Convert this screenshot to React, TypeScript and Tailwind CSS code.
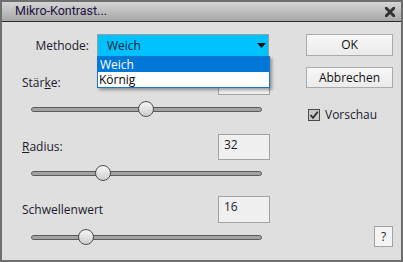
import React from 'react';

const font = { fontFamily: '"Open Sans", "Noto Sans", sans-serif' };

const Slider: React.FC<{ pos: number }> = ({ pos }) => (
  <div className="relative ml-[9px] w-[231px] h-[14px] flex items-center">
    <div className="w-full h-[5px] rounded-full border border-[#5a5a5a] bg-[#a3a3a3]" />
    {/* thumb sits on the track */}
    <div
      className="absolute top-[-1px] w-[16px] h-[16px] rounded-full border border-[#4f4f4f] bg-gradient-to-b from-[#f6f6f6] to-[#cfcfcf]"
      style={{ left: pos - 8 }}
    />
  </div>
);

const ValueBox: React.FC<{ value?: string; h?: string }> = ({ value, h = 'h-[26px]' }) => (
  <div className={`w-[52px] ${h} border border-[#a2a2a2] bg-[#f0f0f0] pl-[5px] pt-[2px] text-[12px] leading-[16px] text-[#1b1b2b]`}>
    {value}
  </div>
);

export default function App() {
  return (
    <div style={font} className="w-[403px] h-[262px] border-2 border-[#6e6e6e] bg-[#dfdfdf] flex flex-col text-[12px] text-[#1d1a2e] select-none">
      {/* Title bar */}
      <div className="h-[20px] shrink-0 flex items-center justify-between pl-[13px] pr-[6px] border-b border-[#2b2b2b] bg-gradient-to-b from-[#d6d6d6] to-[#a6a6a6]">
        <span style={{ fontFamily: 'Roboto, sans-serif' }} className="text-[12.5px] text-[#1e1040] leading-none">Mikro-Kontrast...</span>
        <svg width="10" height="10" viewBox="0 0 10 10">
          <path d="M1.2 1.2 L8.8 8.8 M8.8 1.2 L1.2 8.8" stroke="#333" strokeWidth="3" strokeLinecap="square" />
        </svg>
      </div>

      <div className="flex-1 flex">
        {/* Left column */}
        <div className="w-[268px] pl-[20px] flex flex-col">
          <div className="mt-[12px] h-[23px] flex items-center">
            <span className="w-[67px] text-right">Methode:</span>
            <div className="relative ml-[8px] w-[172px] h-[23px]">
              <div className="w-full h-full border border-[#9c9c9c] bg-[#00c2ff] flex items-center justify-between pl-[9px] pr-[2px] text-[#0c2433]">
                <span>Weich</span>
                <svg width="9" height="5" viewBox="0 0 9 5">
                  <path d="M0 0 H9 L4.5 5 Z" fill="#111" />
                </svg>
              </div>
              {/* open dropdown list */}
              <div className="absolute left-0 top-[22px] w-[173px] border border-[#1a74d2] bg-white shadow-[2px_2px_3px_rgba(0,0,0,0.35)] z-10">
                <div className="h-[15px] bg-[#0078d7] text-white pl-[2px] leading-[15px]">Weich</div>
                <div className="h-[15px] text-black pl-[1px] leading-[15px]">Körnig</div>
              </div>
            </div>
          </div>

          <div className="mt-[13px] h-[25px] flex items-center justify-between">
            <span>Stär<span className="underline">k</span>e:</span>
            <ValueBox h="h-[25px]" />
          </div>
          <div className="mt-[7px]">
            <Slider pos={115} />
          </div>

          <div className="mt-[18px] h-[26px] flex items-center justify-between">
            <span><span className="underline">R</span>adius:</span>
            <ValueBox value="32" />
          </div>
          <div className="mt-[6px]">
            <Slider pos={72} />
          </div>

          <div className="mt-[16px] h-[27px] flex items-center justify-between">
            <span>Schwellenwert</span>
            <ValueBox value="16" h="h-[27px]" />
          </div>
          <div className="mt-[7px]">
            <Slider pos={55} />
          </div>
        </div>

        {/* Right column */}
        <div className="ml-[36px] w-[87px] flex flex-col">
          <button className="mt-[12px] h-[22px] border border-[#ababab] bg-gradient-to-b from-[#f7f7f7] to-[#ebebeb] text-[#111]">OK</button>
          <button className="mt-[11px] h-[21px] border border-[#ababab] bg-gradient-to-b from-[#f7f7f7] to-[#ebebeb] text-[#111]">Abbrechen</button>
          <label className="mt-[20px] ml-[2px] flex items-center gap-[5px] h-[13px]">
            <span className="w-[12px] h-[12px] border border-[#4a4a4a] bg-[#c9c9c9] flex items-center justify-center">
              <svg width="10" height="10" viewBox="0 0 10 10">
                <path d="M1.5 5 L4 7.8 L8.8 1.8" stroke="#2e2e2e" strokeWidth="1.8" fill="none" />
              </svg>
            </span>
            <span className="text-[#1d1a2e]">Vorschau</span>
          </label>
          <button className="mt-auto mb-[13px] self-end w-[19px] h-[21px] border border-[#a3a3a3] bg-[#f4f4f4] text-[#222] leading-none">?</button>
        </div>
      </div>
    </div>
  );
}
